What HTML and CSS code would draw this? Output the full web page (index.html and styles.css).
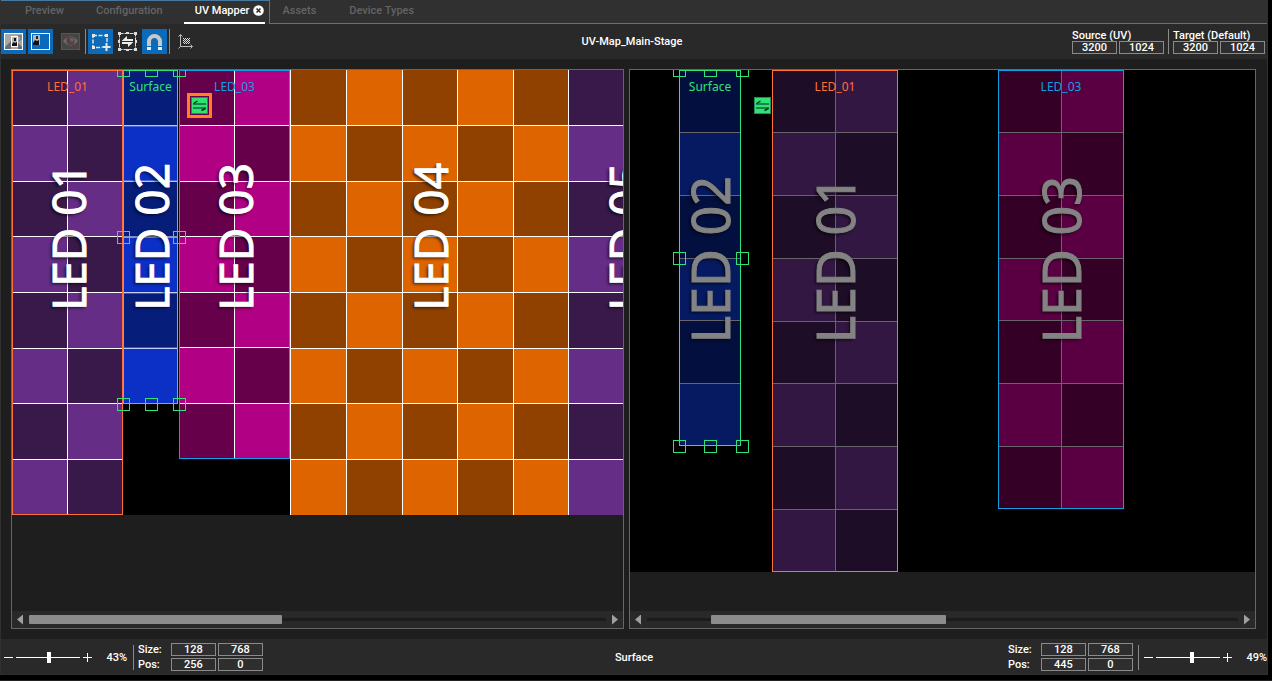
FILE: index.html
```html
<!DOCTYPE html>
<html lang="en">
<head>
<meta charset="utf-8">
<title>UV Mapper</title>
<link rel="stylesheet" href="styles.css">
</head>
<body>
<svg class="defs" aria-hidden="true">
  <defs>
    <symbol id="board-2" viewBox="0 0 2 8" preserveAspectRatio="none">
      <path class="dark" d="M0 0h1v1H0zM1 1h1v1H1zM0 2h1v1H0zM1 3h1v1H1zM0 4h1v1H0zM1 5h1v1H1zM0 6h1v1H0zM1 7h1v1H1z"/>
      <path class="rule" d="M0 1h2M0 2h2M0 3h2M0 4h2M0 5h2M0 6h2M0 7h2M1 0v8"/>
    </symbol>
    <symbol id="board-2-short" viewBox="0 0 2 7" preserveAspectRatio="none">
      <path class="dark" d="M0 0h1v1H0zM1 1h1v1H1zM0 2h1v1H0zM1 3h1v1H1zM0 4h1v1H0zM1 5h1v1H1zM0 6h1v1H0z"/>
      <path class="rule" d="M0 1h2M0 2h2M0 3h2M0 4h2M0 5h2M0 6h2M1 0v7"/>
    </symbol>
    <symbol id="board-1" viewBox="0 0 1 6" preserveAspectRatio="none">
      <path class="dark" d="M0 0h1v1H0zM0 2h1v1H0zM0 4h1v1H0z"/>
      <path class="rule" d="M0 1h1M0 2h1M0 3h1M0 4h1M0 5h1"/>
    </symbol>
    <symbol id="board-5" viewBox="0 0 5 8" preserveAspectRatio="none">
      <path class="dark" d="M0 0h1v1H0zM2 0h1v1H2zM4 0h1v1H4zM1 1h1v1H1zM3 1h1v1H3zM0 2h1v1H0zM2 2h1v1H2zM4 2h1v1H4zM1 3h1v1H1zM3 3h1v1H3zM0 4h1v1H0zM2 4h1v1H2zM4 4h1v1H4zM1 5h1v1H1zM3 5h1v1H3zM0 6h1v1H0zM2 6h1v1H2zM4 6h1v1H4zM1 7h1v1H1zM3 7h1v1H3z"/>
      <path class="rule" d="M0 1h5M0 2h5M0 3h5M0 4h5M0 5h5M0 6h5M0 7h5M1 0v8M2 0v8M3 0v8M4 0v8"/>
    </symbol>
    <symbol id="swap" viewBox="0 0 17 17">
      <rect x=".5" y=".5" width="16" height="16" fill="#2fe373" stroke="#1f8f58"/>
      <path d="M2 6h13v2H2zM2 10h13v2H2z" fill="#17844a"/>
      <path d="M2.500 6.500l4-2.500M14.500 11.500l-4 2" stroke="#052f17" stroke-width="1.400"/>
    </symbol>
  </defs>
</svg>

<div class="app">
  <nav class="tabs" aria-label="Views">
    <div class="tabs-open">
      <button class="tab tab-preview" type="button">Preview</button>
      <button class="tab tab-config" type="button">Configuration</button>
      <div class="tab-active">
        <button class="tab" type="button">UV Mapper</button>
        <button class="close" type="button" aria-label="Close UV Mapper">
          <svg width="11" height="11" viewBox="0 0 11 11"><circle cx="5.500" cy="5.500" r="5.300" fill="#fff"/><path d="M3.500 3.500l4 4M7.500 3.500l-4 4" stroke="#303030" stroke-width="1.600"/></svg>
        </button>
      </div>
    </div>
    <div class="tabs-rest">
      <button class="tab" type="button">Assets</button>
      <button class="tab" type="button">Device Types</button>
    </div>
  </nav>

  <header class="toolbar">
    <div class="tools">
      <button class="tool on" type="button" aria-label="Show source image">
        <svg width="25" height="25" viewBox="0 0 25 25"><rect x="3.500" y="4.500" width="18" height="16" fill="#a8a8a8" stroke="#fff"/><path d="M4 20v-2l6-6v8zM17 20v-6l4 4v2z" fill="#6c6c6c"/><path d="M17 7h3v3l-2 2" fill="none" stroke="#777" stroke-width="1.500"/><rect x="10.500" y="7.500" width="6" height="10" fill="#b5b5b5" stroke="#fff"/><path d="M11 17v-2l2-2 1 1 2-1v4z" fill="#111"/><path d="M13 9h2v3h-2z" fill="#111"/></svg>
      </button>
      <button class="tool on" type="button" aria-label="Show surface image">
        <svg width="25" height="25" viewBox="0 0 25 25"><rect x="3.500" y="4.500" width="18" height="16" fill="none" stroke="#fff"/><rect x="5" y="6" width="7" height="10" fill="#b8b8b8"/><path d="M5 16v-2l2-3 2 1 2-1v5z" fill="#111"/><path d="M8 7h2v3H8z" fill="#222"/></svg>
      </button>
      <button class="tool tool-eye" type="button" aria-label="Hide overlays" disabled>
        <svg width="20" height="18" viewBox="0 0 20 18"><rect x=".5" y=".5" width="18" height="16" fill="#454545" stroke="#555"/><path d="M2 8q7.500-9 15 0q-7.500 9-15 0z" fill="#6a6a6a"/><circle cx="9.500" cy="8" r="4" fill="#474747"/><circle cx="10.500" cy="7" r="2" fill="#666"/><path d="M3 2l14 14" stroke="#7d3034" stroke-width="1.200"/></svg>
      </button>
      <span class="divider"></span>
      <button class="tool on" type="button" aria-label="Add surface">
        <svg width="25" height="25" viewBox="0 0 25 25"><rect x="5" y="6.500" width="14" height="12" fill="none" stroke="#e0e0e0" stroke-width="1.500" stroke-dasharray="4 1.500"/><path d="M4 5h3v3H4zM17 5h3v3h-3zM4 17h3v3H4z" fill="#e8e8e8"/><path d="M14 13h10v11H14z" fill="#0c6abb"/><path d="M18.500 14v8M14.500 18h8" stroke="#e8e8e8" stroke-width="2"/></svg>
      </button>
      <button class="tool tool-swap" type="button" aria-label="Swap surfaces">
        <svg width="19" height="19" viewBox="0 0 19 19"><rect x="1.500" y="1.500" width="16" height="16" fill="none" stroke="#ddd" stroke-dasharray="4 1"/><path d="M0 0h3v3H0zM16 0h3v3h-3zM0 16h3v3H0zM16 16h3v3h-3zM8 0h3v2H8zM8 17h3v2H8zM0 8h2v3H0zM17 8h2v3h-2z" fill="#ddd"/><path d="M4 8.500L9 4v3h6v2H4zM15 10.500L10 15v-3H4v-2h11z" fill="#eee"/></svg>
      </button>
      <button class="tool on" type="button" aria-label="Snap">
        <svg width="25" height="25" viewBox="0 0 25 25"><path d="M7 20v-7.500a5.500 5.500 0 0 1 11 0V20" fill="none" stroke="#c8c8c8" stroke-width="4"/><path d="M4.500 17.500h5M15.500 17.500h5" stroke="#0c6abb"/><path d="M5 18h4v3H5zM16 18h4v3h-4z" fill="#eee"/></svg>
      </button>
      <span class="divider"></span>
      <button class="tool tool-axis" type="button" aria-label="Origin">
        <svg width="15" height="15" viewBox="0 0 15 15"><path d="M2.500 1v11.500H14M.5 2.500l2-2 2 2M12.500 10.500l2 2-2 2M.5 14.500l2-2" fill="none" stroke="#bbb"/><path d="M5 4h1v1H5zM7 4h1v1H7zM9 4h1v1H9zM11 4h1v1h-1zM6 5h1v1H6zM8 5h1v1H8zM10 5h1v1h-1zM5 6h1v1H5zM7 6h1v1H7zM9 6h1v1H9zM11 6h1v1h-1zM6 7h1v1H6zM8 7h1v1H8zM10 7h1v1h-1zM5 8h1v1H5zM7 8h1v1H7zM9 8h1v1H9zM11 8h1v1h-1zM6 9h1v1H6zM8 9h1v1H8zM10 9h1v1h-1z" fill="#ddd" shape-rendering="crispEdges"/></svg>
      </button>
    </div>
    <h1 class="title">UV-Map_Main-Stage</h1>
    <div class="sizes">
      <fieldset class="size">
        <legend>Source (UV)</legend>
        <input class="field" value="3200" aria-label="Source width">
        <input class="field" value="1024" aria-label="Source height">
      </fieldset>
      <span class="divider"></span>
      <fieldset class="size">
        <legend>Target (Default)</legend>
        <input class="field" value="3200" aria-label="Target width">
        <input class="field" value="1024" aria-label="Target height">
      </fieldset>
    </div>
  </header>

  <main class="views">
    <section class="view" aria-label="Source">
      <div class="canvas source">
        <div class="stage"></div>
        <div class="surface s1 purple"><svg class="board"><use href="#board-2"/></svg><span class="art">LED 01</span><span class="name">LED_01</span></div>
        <div class="surface s3 pink"><svg class="board"><use href="#board-2-short"/></svg><span class="art">LED 03</span><span class="name">LED_03</span></div>
        <div class="surface s4 orange"><svg class="board"><use href="#board-5"/></svg><span class="art">LED 04</span></div>
        <div class="surface s5 purple"><svg class="board"><use href="#board-2"/></svg><span class="art">LED 05</span></div>
        <div class="surface s2 blue"><svg class="board"><use href="#board-1"/></svg><span class="art">LED 02</span><span class="name">Surface</span>
          <i class="handle tl"></i><i class="handle tc"></i><i class="handle tr"></i><i class="handle ml"></i><i class="handle mr"></i><i class="handle bl"></i><i class="handle bc"></i><i class="handle br"></i>
        </div>
        <button class="swap picked" type="button" aria-label="Swap"><svg width="17" height="17"><use href="#swap"/></svg></button>
      </div>
      <div class="scroll">
        <button class="arrow prev" type="button" aria-label="Scroll left"></button>
        <div class="track"><div class="thumb" style="margin-left:0%;width:43.8%"></div></div>
        <button class="arrow next" type="button" aria-label="Scroll right"></button>
      </div>
    </section>

    <section class="view" aria-label="Target">
      <div class="canvas target">
        <div class="stage"></div>
        <div class="surface s1 purple"><svg class="board"><use href="#board-2"/></svg><span class="art">LED 01</span><span class="name">LED_01</span></div>
        <div class="surface s3 pink"><svg class="board"><use href="#board-2-short"/></svg><span class="art">LED 03</span><span class="name">LED_03</span></div>
        <div class="surface s2 blue"><svg class="board"><use href="#board-1"/></svg><span class="art">LED 02</span><span class="name">Surface</span>
          <i class="handle tl"></i><i class="handle tc"></i><i class="handle tr"></i><i class="handle ml"></i><i class="handle mr"></i><i class="handle bl"></i><i class="handle bc"></i><i class="handle br"></i>
        </div>
        <button class="swap" type="button" aria-label="Swap"><svg width="17" height="17"><use href="#swap"/></svg></button>
      </div>
      <div class="scroll">
        <button class="arrow prev" type="button" aria-label="Scroll left"></button>
        <div class="track"><div class="thumb" style="margin-left:10.8%;width:39.8%"></div></div>
        <button class="arrow next" type="button" aria-label="Scroll right"></button>
      </div>
    </section>
  </main>

  <footer class="status">
    <div class="group">
      <div class="zoom">
        <button class="step minus" type="button" aria-label="Zoom out"></button>
        <input class="slider" type="range" min="0" max="100" value="52" aria-label="Source zoom">
        <button class="step plus" type="button" aria-label="Zoom in"></button>
        <output class="percent">43%</output>
      </div>
      <span class="divider"></span>
      <div class="coords">
        <label for="sw">Size:</label><input id="sw" class="field" value="128"><input class="field" value="768" aria-label="Height">
        <label for="sx">Pos:</label><input id="sx" class="field" value="256"><input class="field" value="0" aria-label="Y">
      </div>
    </div>
    <div class="selected">Surface</div>
    <div class="group end">
      <div class="coords">
        <label for="tw">Size:</label><input id="tw" class="field" value="128"><input class="field" value="768" aria-label="Height">
        <label for="tx">Pos:</label><input id="tx" class="field" value="445"><input class="field" value="0" aria-label="Y">
      </div>
      <span class="divider"></span>
      <div class="zoom">
        <button class="step minus" type="button" aria-label="Zoom out"></button>
        <input class="slider" type="range" min="0" max="100" value="57" aria-label="Target zoom">
        <button class="step plus" type="button" aria-label="Zoom in"></button>
        <output class="percent">49%</output>
      </div>
    </div>
  </footer>
</div>
</body>
</html>
```
FILE: styles.css
```css
* { box-sizing: border-box; }

body {
  margin: 0;
  min-height: 100vh;
  padding: 0 4px 5px 0;
  border-bottom: 1px solid #222;
  background: #000;
  color: #fff;
  font: 500 11px/13px Roboto, sans-serif;
  display: flex;
}

button, input { font: inherit; color: inherit; margin: 0; padding: 0; border: 0; background: none; }
svg { display: block; }
.defs { position: absolute; width: 0; height: 0; }

.app {
  flex: 1;
  min-width: 0;
  display: flex;
  flex-direction: column;
  background: #1e1e1e;
  border: 1px solid #303030;
  border-top: 0;
}

/* Tabs */
.tabs { display: flex; height: 24px; background: #303030; }
.tabs-open { display: flex; padding-left: 24px; border-top: 1px solid #4779a0; border-right: 1px solid #4779a0; }
.tabs-rest { display: flex; flex: 1; gap: 33px; padding: 1px 0 0 12px; border-bottom: 1px solid #4779a0; }
.tab { color: #646464; padding-bottom: 4px; white-space: nowrap; }
.tab-config { margin: 0 21px 0 32px; }
.tab-active { display: flex; gap: 4px; padding: 0 1px 0 11px; margin-right: 4px; border-bottom: 2px solid #fff; }
.tab-active .tab { color: #fff; padding-bottom: 2px; }
.close { padding-bottom: 3px; }

/* Toolbar */
.toolbar {
  display: grid;
  grid-template-columns: 1fr auto 1fr;
  height: 35px;
  background: #292929;
}
.tools { display: flex; align-items: flex-start; padding-top: 5px; }
.tool { width: 25px; height: 25px; margin-right: 2px; display: grid; place-items: center; }
.tool.on { background: #0c6abb; }
.tool-eye { width: 20px; margin: 0 4px 0 6px; }
.tool-axis { margin-left: 1px; }
.divider { width: 1px; height: 25px; background: #8a8a8a; flex: none; margin-right: 2px; }
.title { margin: 0; padding-right: 4px; font: inherit; align-self: center; }
.sizes { display: flex; justify-content: flex-end; padding: 5px 2px 0 0; }
.sizes .divider { margin: 0 4px; }
.size { display: flex; flex-wrap: wrap; gap: 2px; width: 92px; margin: 0; padding: 0; border: 0; }
.size legend { padding: 0; height: 12px; white-space: nowrap; }
.field { width: 45px; height: 13px; border: 1px solid #8a8a8a; background: #2e2e2e; text-align: center; line-height: 11px; }

/* Views */
.views {
  flex: 1;
  display: grid;
  grid-template-columns: 613fr 627fr;
  gap: 5px;
  padding: 10px 11px 10px 10px;
}
.view { display: flex; flex-direction: column; min-width: 0; border: 1px solid #666; }
.canvas { flex: 1; position: relative; overflow: hidden; }
.stage { position: absolute; inset: 0 0 auto; background: #000; }
.surface { position: absolute; top: 0; display: flex; justify-content: center; background: var(--light); }
.surface::after { content: ""; position: absolute; inset: 0; border: 1px solid var(--edge); }
.board { position: absolute; inset: 0; width: 100%; height: 100%; shape-rendering: crispEdges; }
.dark { fill: var(--dark); }
.rule { stroke: var(--rule); stroke-width: 1px; vector-effect: non-scaling-stroke; }
.name { position: absolute; top: 9px; z-index: 1; color: var(--edge); font: 400 12px/16px "Noto Sans", sans-serif; }
.art {
  position: absolute;
  writing-mode: vertical-rl;
  rotate: 180deg;
  font-family: "Noto Sans", sans-serif;
  font-weight: 400;
  white-space: nowrap;
  -webkit-text-stroke: 1px currentColor;
  text-shadow: -2px -2px 3px #0009;
}

.source { --rule: #fff; }
.source .stage { height: 445px; }
.source .art { top: 93px; font-size: 46px; line-height: 56px; }
.source .purple { --light: #652d85; --dark: #39194a; --edge: #ff7038; }
.source .blue { --light: #0c30c6; --dark: #071d7a; --edge: #31e276; }
.source .pink { --light: #b10083; --dark: #66004b; --edge: #119fe2; }
.source .orange { --light: #de6400; --dark: #904100; --edge: transparent; }
.source .s1 { left: 0; width: 111px; height: 445px; }
.source .s2 { left: 111px; width: 55px; height: 334px; }
.source .s3 { left: 167px; width: 111px; height: 389px; }
.source .s4 { left: 278px; width: 279px; height: 445px; border-left: 1px solid #fff; }
.source .s5 { left: 556px; width: 112px; height: 445px; --edge: transparent; border-left: 1px solid #fff; }

.target { --rule: #69636b; }
.target .stage { height: 502px; }
.target .art { top: 106px; font-size: 52px; line-height: 62px; color: #838383; }
.target .purple { --light: #331743; --dark: #1e0d27; --edge: #ff7038; }
.target .blue { --light: #061a62; --dark: #030f3e; --edge: #31e276; }
.target .pink { --light: #5a0042; --dark: #340026; --edge: #119fe2; }
.target .s1 { left: 142px; width: 126px; height: 502px; }
.target .s2 { left: 49px; width: 62px; height: 376px; }
.target .s3 { left: 368px; width: 126px; height: 439px; }

.handle { position: absolute; z-index: 2; width: 13px; height: 13px; border: 1px solid var(--edge); }
.tl, .tc, .tr { top: -6px; }
.ml, .mr { top: calc(50% - 6px); }
.bl, .bc, .br { bottom: -7px; }
.tl, .ml, .bl { left: -6px; }
.tc, .bc { left: calc(50% - 6px); }
.tr, .mr, .br { right: -8px; }

.swap { position: absolute; top: 27px; left: 124px; }
.swap.picked { top: 23px; left: 175px; padding: 1px; border: 3px solid #ff7f22; background: #66004b; }

/* Scroll bars */
.scroll { display: flex; align-items: center; height: 17px; padding: 0 5px; gap: 6px; background: #292929; }
.track { flex: 1; background: linear-gradient(#1c1c1c, #1c1c1c) center / 100% 3px no-repeat; }
.thumb { height: 9px; border-radius: 1px; background: #8c8c8c; }
.arrow { width: 6px; height: 10px; background: #a0a0a0; }
.prev { clip-path: polygon(100% 0, 100% 100%, 0 50%); }
.next { clip-path: polygon(0 0, 0 100%, 100% 50%); }

/* Status bar */
.status {
  display: grid;
  grid-template-columns: 1fr auto 1fr;
  align-items: center;
  height: 35px;
  padding-top: 1px;
  background: #292929;
}
.group { display: flex; align-items: center; gap: 4px; padding-left: 3px; }
.group.end { justify-content: flex-end; padding: 0; gap: 5px; }
.status .divider { margin: 0; }
.zoom { display: flex; align-items: center; gap: 3px; }
.step { width: 9px; height: 9px; background: linear-gradient(#fff, #fff) center / 100% 1px no-repeat; }
.plus { background: linear-gradient(#fff, #fff) center / 100% 1px no-repeat, linear-gradient(#fff, #fff) center / 1px 100% no-repeat; }
.percent { width: 32px; text-align: right; }
.group:not(.end) .percent { margin-right: 2px; }
.slider { appearance: none; width: 64px; height: 11px; background: linear-gradient(#fff, #fff) center / 100% 1px no-repeat; }
.slider::-webkit-slider-thumb { appearance: none; width: 4px; height: 11px; background: #fff; }
.coords { display: grid; grid-template-columns: 31px 45px 45px; gap: 2px; }
```
